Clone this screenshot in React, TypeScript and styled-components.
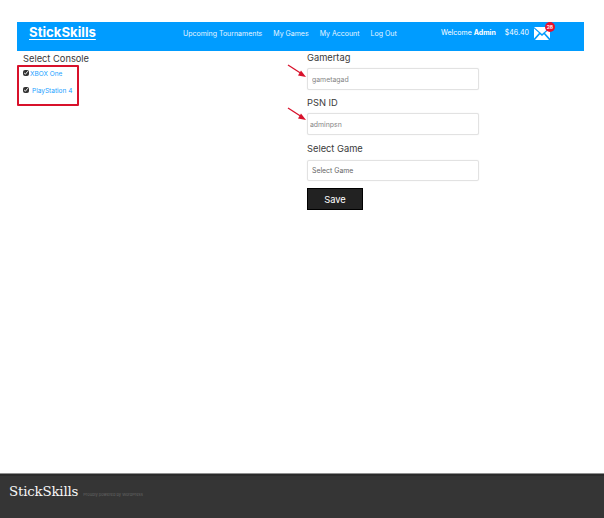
import React from "react";
import styled, { createGlobalStyle } from "styled-components";

const Global = createGlobalStyle`
  html, body { margin: 0; padding: 0; background: #fff; }
  body { font-family: "Inter", "Open Sans", sans-serif; overflow: hidden; }
`;
const Page = styled.div`
  height: 518px;
  display: flex;
  flex-direction: column;
`;
const Main = styled.main`
  flex: 1;
  padding: 22px 20px 0 17px;
`;
const Header = styled.header`
  height: 29px;
  background: #009cff;
  display: flex;
  align-items: flex-start;
  color: #fff;
  position: relative;
`;
const Logo = styled.a`
  font-family: "Inter", sans-serif;
  font-weight: 700;
  font-size: 13.2px;
  line-height: 19px;
  margin: 1px 0 0 12px;
  width: 154px;
  color: #fff;
  text-decoration: underline;
  text-decoration-thickness: 1px;
  text-underline-offset: 2px;
`;
const Nav = styled.nav`
  display: flex;
  gap: 11px;
  font-size: 7px;
  line-height: 10px;
  margin-top: 6.5px;
  width: 258px;
`;
const NavLink = styled.a`
  color: #e6f5ff;
  white-space: nowrap;
`;
const Account = styled.div`
  display: flex;
  font-size: 7px;
  line-height: 10px;
  margin-top: 6px;
  gap: 9px;
  white-space: nowrap;
`;
const Mail = styled.div`
  position: relative;
  width: 16px;
  height: 13px;
  margin: -1px 0 0 -4px;
`;
const Badge = styled.span`
  position: absolute;
  left: 11px;
  top: -5px;
  width: 10px;
  height: 10px;
  border-radius: 50%;
  background: #e8112d;
  color: #fff;
  font-size: 5px;
  font-weight: 700;
  line-height: 10px;
  text-align: center;
`;
const Content = styled.div`
  display: grid;
  grid-template-columns: 290px 172px;
  position: relative;
`;
const Heading = styled.div`
  font-size: 9.3px;
  line-height: 14px;
  color: #3a3a3a;
`;
const SelectHeading = styled(Heading)`
  margin-top: 1px;
`;
const Left = styled.section`
  padding: 1px 0 0 6px;
`;
const CheckRow = styled.label<{ $gap: number; $top: number }>`
  display: flex;
  align-items: center;
  gap: ${(p) => p.$gap}px;
  height: 10px;
  margin-top: ${(p) => p.$top}px;
  font-size: 6.5px;
  color: #1a9fff;
`;
const Check = styled.input`
  width: 6px;
  height: 6px;
  margin: 0 0 2px 0;
  accent-color: #333;
`;
const Right = styled.section`
  display: flex;
  flex-direction: column;
`;
const Field = styled.input<{ $inset: number }>`
  box-sizing: border-box;
  width: 172px;
  height: 22px;
  margin: 3px 0 6px;
  padding: 0 ${(p) => p.$inset}px;
  border: 1px solid #e2e2e2;
  border-radius: 2px;
  box-shadow: 0 0 1px #e2e2e2;
  font: 6.9px "Inter", sans-serif;
  background: #fff;
  &::placeholder { color: #858585; opacity: 1; }
`;
const SelectBox = styled.div`
  box-sizing: border-box;
  width: 172px;
  height: 21px;
  margin: 4px 0 7px;
  padding: 0 4px;
  border: 1px solid #e2e2e2;
  border-radius: 2px;
  box-shadow: 0 0 1px #e2e2e2;
  font-size: 6.9px;
  line-height: 19px;
  color: #666;
`;
const Save = styled.button`
  width: 56px;
  height: 22px;
  padding: 0;
  border: 1px solid #000;
  background: #222;
  color: #fff;
  font: 9.4px "Inter", sans-serif;
`;
const Annotation = styled.div`
  position: absolute;
  left: 0;
  top: 14px;
  width: 62px;
  height: 41px;
  box-sizing: border-box;
  border: 2px solid #d8112b;
  border-radius: 1px;
  pointer-events: none;
`;
const Arrow = styled.svg<{ $top: number }>`
  position: absolute;
  left: 270px;
  top: ${(p) => p.$top}px;
  width: 20px;
  height: 16px;
`;
const Footer = styled.footer`
  height: 45px;
  box-sizing: border-box;
  background: #353535;
  border-top: 1px solid #8f8f8f;
  box-shadow: inset 0 2px #2b2b2b;
  display: flex;
  align-items: flex-start;
  padding: 8px 0 0 9px;
`;
const FooterLogo = styled.span`
  font-family: "DejaVu Serif", "Liberation Serif", serif;
  font-size: 13.4px;
  line-height: 20px;
  color: #f6f6f6;
  letter-spacing: -0.2px;
`;
const Powered = styled.span`
  font-size: 4px;
  line-height: 8px;
  margin: 9px 0 0 5px;
  color: #666;
`;

const arrow = (
  <>
    <line x1="1" y1="1" x2="15" y2="10" stroke="#d8112b" strokeWidth="1.3" />
    <path d="M19 13 L11 11.5 L14 6.5 Z" fill="#d8112b" />
  </>
);

export default function App() {
  return (
    <Page>
      <Global />
      <Main>
        <Header>
          <Logo>StickSkills</Logo>
          <Nav>
            <NavLink>Upcoming Tournaments</NavLink>
            <NavLink>My Games</NavLink>
            <NavLink>My Account</NavLink>
            <NavLink>Log Out</NavLink>
          </Nav>
          <Account>
            <span>Welcome <b>Admin</b></span>
            <span>$46.40</span>
            <Mail>
              <svg width="16" height="13" viewBox="0 0 16 13">
                <path d="M0 0H16L8 7Z" fill="#fff" />
                <path d="M0 1.5V11.5L5 6ZM16 1.5V11.5L11 6Z" fill="#fff" />
                <path d="M1 13L6 7.2L8 9L10 7.2L15 13Z" fill="#fff" />
              </svg>
              <Badge>28</Badge>
            </Mail>
          </Account>
        </Header>
        <Content>
          <Left>
            <Heading>Select Console</Heading>
            <CheckRow $gap={1} $top={3}><Check type="checkbox" defaultChecked />XBOX One</CheckRow>
            <CheckRow $gap={3} $top={7}><Check type="checkbox" defaultChecked />PlayStation 4</CheckRow>
          </Left>
          <Right>
            <Heading>Gamertag</Heading>
            <Field $inset={4} placeholder="gametagad" />
            <Heading>PSN ID</Heading>
            <Field $inset={2} placeholder="adminpsn" />
            <SelectHeading>Select Game</SelectHeading>
            <SelectBox>Select Game</SelectBox>
            <Save>Save</Save>
          </Right>
          <Annotation />
          <Arrow $top={13} viewBox="0 0 20 16">{arrow}</Arrow>
          <Arrow $top={56} viewBox="0 0 20 16">{arrow}</Arrow>
        </Content>
      </Main>
      <Footer>
        <FooterLogo>StickSkills</FooterLogo>
        <Powered>Proudly powered by WordPress</Powered>
      </Footer>
    </Page>
  );
}
